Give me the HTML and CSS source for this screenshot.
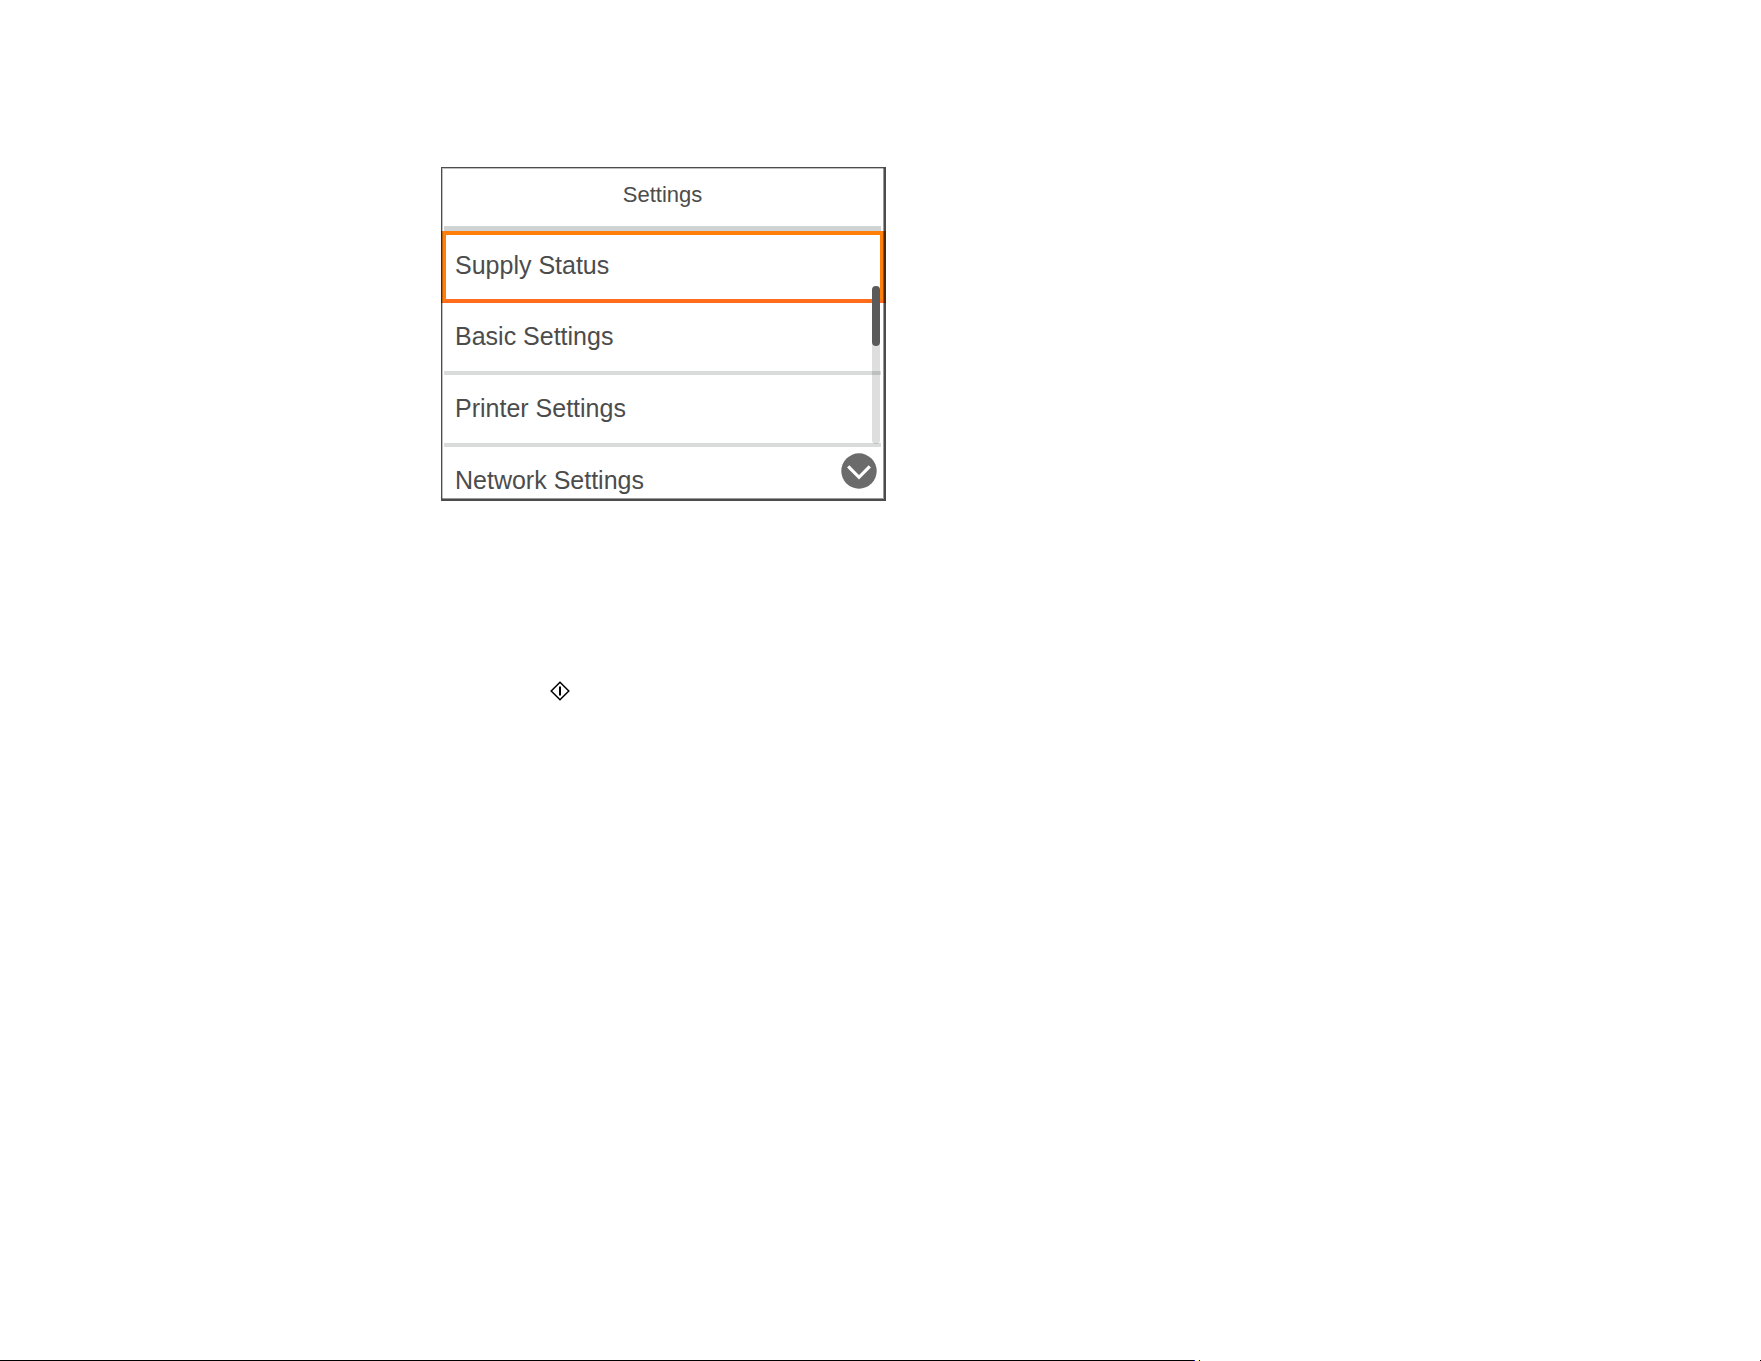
FILE: index.html
```html
<!DOCTYPE html>
<html lang="en">
<head>
    <meta charset="UTF-8">
    <meta name="viewport" content="width=device-width, initial-scale=1.0">
    <title>Settings</title>
    <link rel="stylesheet" href="styles.css">
</head>
<body>
    <main class="content">
        <section class="panel">
            <h1 class="title">Settings</h1>
            <div class="menu">
                <button type="button" class="row selected">Supply Status</button>
                <button type="button" class="row">Basic Settings</button>
                <button type="button" class="row">Printer Settings</button>
                <button type="button" class="row last">Network Settings</button>
            </div>
            <div class="track"><div class="thumb"></div></div>
            <button type="button" class="down" aria-label="Scroll down">
                <svg width="36" height="36" viewBox="0 0 36 36">
                    <circle cx="18" cy="18" r="17.7" fill="#6b6b6b"/>
                    <path d="M7.2 13.4L18 24.3L28.8 13.4" fill="none" stroke="#fff" stroke-width="3.2"/>
                </svg>
            </button>
        </section>

        <svg class="start-icon" width="20" height="20" viewBox="0 0 20 20">
            <path d="M10 1.2L18.8 10L10 18.8L1.2 10Z" fill="#fff" stroke="#000" stroke-width="1.5"/>
            <path d="M10 5.5V14.5" stroke="#000" stroke-width="2"/>
        </svg>
    </main>

    <footer class="footer">
        <div class="rule"></div>
        <svg class="specks" width="6" height="1" viewBox="0 0 6 1" shape-rendering="crispEdges">
            <rect x="0" width="1" height="1" fill="#2222dd"/>
            <rect x="4" width="1" height="1" fill="#ffff66"/>
            <rect x="5" width="1" height="1" fill="#000"/>
        </svg>
        <div class="dot"></div>
    </footer>
</body>
</html>
```

FILE: styles.css
```css
* {
    margin: 0;
    padding: 0;
    box-sizing: border-box;
}

body {
    display: flex;
    flex-direction: column;
    min-height: 100vh;
    background: #fff;
    font-family: "Liberation Sans", Arial, sans-serif;
}

.content {
    flex: 1;
    padding: 167px 20px 0 441px;
}

.panel {
    position: relative;
    max-width: 445px;
    height: 334px;
    overflow: hidden;
}

/* see-through frame, so the selected row shows under it */
.panel::after {
    content: "";
    position: absolute;
    inset: 0;
    border: 1px solid rgba(0, 0, 0, 0.7);
    border-right-width: 2px;
    border-bottom-width: 2px;
    box-shadow: inset -1px -1px rgba(0, 0, 0, 0.4), inset 1px 1px rgba(0, 0, 0, 0.25);
    pointer-events: none;
}

.title {
    height: 64px;
    margin: 0 5px 0 3px;
    padding-top: 4px;
    border-bottom: 5px solid #cfd3d4;
    font-size: 22px;
    font-weight: normal;
    line-height: 48px;
    color: #4c4c4c;
    text-align: center;
}

.menu {
    display: flex;
    flex-direction: column;
}

.row {
    height: 72px;
    margin: 0 5px 0 3px;
    padding: 0 11px 2px;
    border: none;
    border-bottom: 4px solid #dadcdc;
    background: none;
    font-family: inherit;
    font-size: 25px;
    color: #4c4c4c;
    text-align: left;
    cursor: pointer;
}

.row.selected {
    margin: 0;
    padding: 0 9px 4px;
    border: 4px solid #ff7f0a;
    border-bottom-color: #ff6d1c;
    border-left-width: 5px;
    border-right-width: 6px;
}

.row.last {
    border-bottom-color: transparent;
}

.track {
    position: absolute;
    top: 119px;
    right: 6px;
    width: 8px;
    height: 158px;
    border-radius: 4px;
    background: rgba(0, 0, 0, 0.13);
}

.thumb {
    height: 60px;
    border-radius: 4px;
    background: #5a5a5a;
}

.down {
    position: absolute;
    right: 9px;
    bottom: 12px;
    width: 36px;
    height: 36px;
    border: none;
    background: none;
    cursor: pointer;
}

.down svg {
    display: block;
}

.start-icon {
    display: block;
    margin: 180px 0 0 109px;
}

.footer {
    display: flex;
    height: 1px;
}

.rule {
    width: calc(100% - 567px);
    background: #000;
}

.dot {
    width: 1px;
    margin-left: auto;
    background: #000;
}
```
